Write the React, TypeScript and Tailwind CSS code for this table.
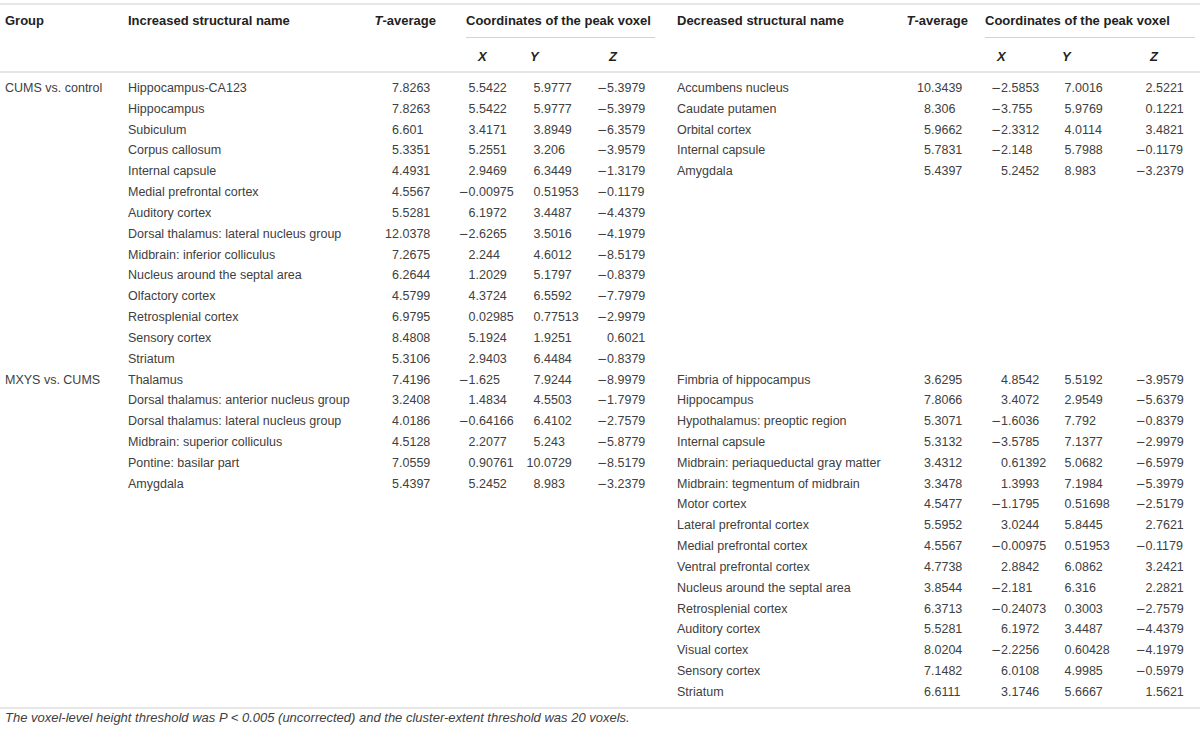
import React from "react";

type Row = [string, string, string, string, string];

const cumsInc: Row[] = [
  ["Hippocampus-CA123", "7.8263", "5.5422", "5.9777", "−5.3979"],
  ["Hippocampus", "7.8263", "5.5422", "5.9777", "−5.3979"],
  ["Subiculum", "6.601", "3.4171", "3.8949", "−6.3579"],
  ["Corpus callosum", "5.3351", "5.2551", "3.206", "−3.9579"],
  ["Internal capsule", "4.4931", "2.9469", "6.3449", "−1.3179"],
  ["Medial prefrontal cortex", "4.5567", "−0.00975", "0.51953", "−0.1179"],
  ["Auditory cortex", "5.5281", "6.1972", "3.4487", "−4.4379"],
  ["Dorsal thalamus: lateral nucleus group", "12.0378", "−2.6265", "3.5016", "−4.1979"],
  ["Midbrain: inferior colliculus", "7.2675", "2.244", "4.6012", "−8.5179"],
  ["Nucleus around the septal area", "6.2644", "1.2029", "5.1797", "−0.8379"],
  ["Olfactory cortex", "4.5799", "4.3724", "6.5592", "−7.7979"],
  ["Retrosplenial cortex", "6.9795", "0.02985", "0.77513", "−2.9979"],
  ["Sensory cortex", "8.4808", "5.1924", "1.9251", "0.6021"],
  ["Striatum", "5.3106", "2.9403", "6.4484", "−0.8379"],
];

const cumsDec: Row[] = [
  ["Accumbens nucleus", "10.3439", "−2.5853", "7.0016", "2.5221"],
  ["Caudate putamen", "8.306", "−3.755", "5.9769", "0.1221"],
  ["Orbital cortex", "5.9662", "−2.3312", "4.0114", "3.4821"],
  ["Internal capsule", "5.7831", "−2.148", "5.7988", "−0.1179"],
  ["Amygdala", "5.4397", "5.2452", "8.983", "−3.2379"],
];

const mxysInc: Row[] = [
  ["Thalamus", "7.4196", "−1.625", "7.9244", "−8.9979"],
  ["Dorsal thalamus: anterior nucleus group", "3.2408", "1.4834", "4.5503", "−1.7979"],
  ["Dorsal thalamus: lateral nucleus group", "4.0186", "−0.64166", "6.4102", "−2.7579"],
  ["Midbrain: superior colliculus", "4.5128", "2.2077", "5.243", "−5.8779"],
  ["Pontine: basilar part", "7.0559", "0.90761", "10.0729", "−8.5179"],
  ["Amygdala", "5.4397", "5.2452", "8.983", "−3.2379"],
];

const mxysDec: Row[] = [
  ["Fimbria of hippocampus", "3.6295", "4.8542", "5.5192", "−3.9579"],
  ["Hippocampus", "7.8066", "3.4072", "2.9549", "−5.6379"],
  ["Hypothalamus: preoptic region", "5.3071", "−1.6036", "7.792", "−0.8379"],
  ["Internal capsule", "5.3132", "−3.5785", "7.1377", "−2.9979"],
  ["Midbrain: periaqueductal gray matter", "3.4312", "0.61392", "5.0682", "−6.5979"],
  ["Midbrain: tegmentum of midbrain", "3.3478", "1.3993", "7.1984", "−5.3979"],
  ["Motor cortex", "4.5477", "−1.1795", "0.51698", "−2.5179"],
  ["Lateral prefrontal cortex", "5.5952", "3.0244", "5.8445", "2.7621"],
  ["Medial prefrontal cortex", "4.5567", "−0.00975", "0.51953", "−0.1179"],
  ["Ventral prefrontal cortex", "4.7738", "2.8842", "6.0862", "3.2421"],
  ["Nucleus around the septal area", "3.8544", "−2.181", "6.316", "2.2821"],
  ["Retrosplenial cortex", "6.3713", "−0.24073", "0.3003", "−2.7579"],
  ["Auditory cortex", "5.5281", "6.1972", "3.4487", "−4.4379"],
  ["Visual cortex", "8.0204", "−2.2256", "0.60428", "−4.1979"],
  ["Sensory cortex", "7.1482", "6.0108", "4.9985", "−0.5979"],
  ["Striatum", "6.6111", "3.1746", "5.6667", "1.5621"],
];

const GRID =
  "grid grid-cols-[123px_232px_85px_80px_65px_75px_200px_115px_75px_70px_80px]";

function Num({ v, intW }: { v?: string; intW: string }) {
  if (!v) return <div />;
  const neg = v.startsWith("−");
  const body = neg ? v.slice(1) : v;
  const [i, f] = body.split(".");
  return (
    <div className="flex whitespace-nowrap">
      <span className={`${intW} shrink-0 text-right`}>
        {neg && <span className="font-['DejaVu_Sans',sans-serif] text-[12px]">−</span>}
        {i}
      </span>
      <span>.{f}</span>
    </div>
  );
}

function DataRow({
  group,
  left,
  right,
}: {
  group?: string;
  left?: Row;
  right?: Row;
}) {
  return (
    <div className={`${GRID} h-[20.83px] items-center`}>
      <div className="pl-[5px] whitespace-nowrap">{group ?? ""}</div>
      <div className="pl-[5px] whitespace-nowrap">{left ? left[0] : ""}</div>
      <Num v={left?.[1]} intW="w-[44px]" />
      <Num v={left?.[2]} intW="w-[35.5px]" />
      <Num v={left?.[3]} intW="w-[20.5px]" />
      <Num v={left?.[4]} intW="w-[29px]" />
      <div className="pl-[17px] whitespace-nowrap">{right ? right[0] : ""}</div>
      <Num v={right?.[1]} intW="w-[71px]" />
      <Num v={right?.[2]} intW="w-[33px]" />
      <Num v={right?.[3]} intW="w-[21.5px]" />
      <Num v={right?.[4]} intW="w-[32.5px]" />
    </div>
  );
}

export default function App() {
  const block1 = Array.from({ length: 14 }, (_, k) => (
    <DataRow
      key={"a" + k}
      group={k === 0 ? "CUMS vs. control" : undefined}
      left={cumsInc[k]}
      right={cumsDec[k]}
    />
  ));
  const block2 = Array.from({ length: 16 }, (_, k) => (
    <DataRow
      key={"b" + k}
      group={k === 0 ? "MXYS vs. CUMS" : undefined}
      left={mxysInc[k]}
      right={mxysDec[k]}
    />
  ));

  return (
    <div className="w-[1200px] h-[732px] bg-white pt-[3px] font-['Liberation_Sans',Arial,sans-serif] text-[#404040] overflow-hidden">
      <div className="h-[2px] bg-[#e6e6e6]" />
      {/* header row 1 */}
      <div className={`${GRID} h-[33px] text-[13px] font-bold text-[#222] leading-[15px]`}>
        <div className="pl-[5px] pt-[8px]">Group</div>
        <div className="pl-[5px] pt-[8px] whitespace-nowrap">Increased structural name</div>
        <div className="pt-[8px] pr-[4px] text-right whitespace-nowrap">
          <span className="italic">T</span>-average
        </div>
        <div className="col-span-3 ml-[26px] mr-[5px] pt-[8px] border-b border-[#d2d2d2] whitespace-nowrap">
          Coordinates of the peak voxel
        </div>
        <div className="pl-[17px] pt-[8px] whitespace-nowrap">Decreased structural name</div>
        <div className="pt-[8px] pr-[7px] text-right whitespace-nowrap">
          <span className="italic">T</span>-average
        </div>
        <div className="col-span-3 ml-[10px] mr-[5px] pt-[8px] border-b border-[#d2d2d2] whitespace-nowrap">
          Coordinates of the peak voxel
        </div>
      </div>
      {/* header row 2 */}
      <div className={`${GRID} h-[33px] text-[13px] font-bold italic text-[#222] leading-[15px]`}>
        <div />
        <div />
        <div />
        <div className="pl-[38px] pt-[11px]">X</div>
        <div className="pl-[10px] pt-[11px]">Y</div>
        <div className="pl-[24px] pt-[11px]">Z</div>
        <div />
        <div />
        <div className="pl-[22px] pt-[11px]">X</div>
        <div className="pl-[12px] pt-[11px]">Y</div>
        <div className="pl-[30px] pt-[11px]">Z</div>
      </div>
      <div className="h-[2px] bg-[#e6e6e6]" />
      <div className="pt-[5px] pb-[4px] text-[12.5px] leading-[15px]">
        {block1}
        {block2}
      </div>
      <div className="h-[2px] bg-[#e6e6e6]" />
      <div className="pl-[5px] pt-[1px] text-[13px] italic leading-[15px] text-[#404040] whitespace-nowrap">
        The voxel-level height threshold was <span>P</span> &lt; 0.005 (uncorrected) and the cluster-extent threshold was 20 voxels.
      </div>
    </div>
  );
}
